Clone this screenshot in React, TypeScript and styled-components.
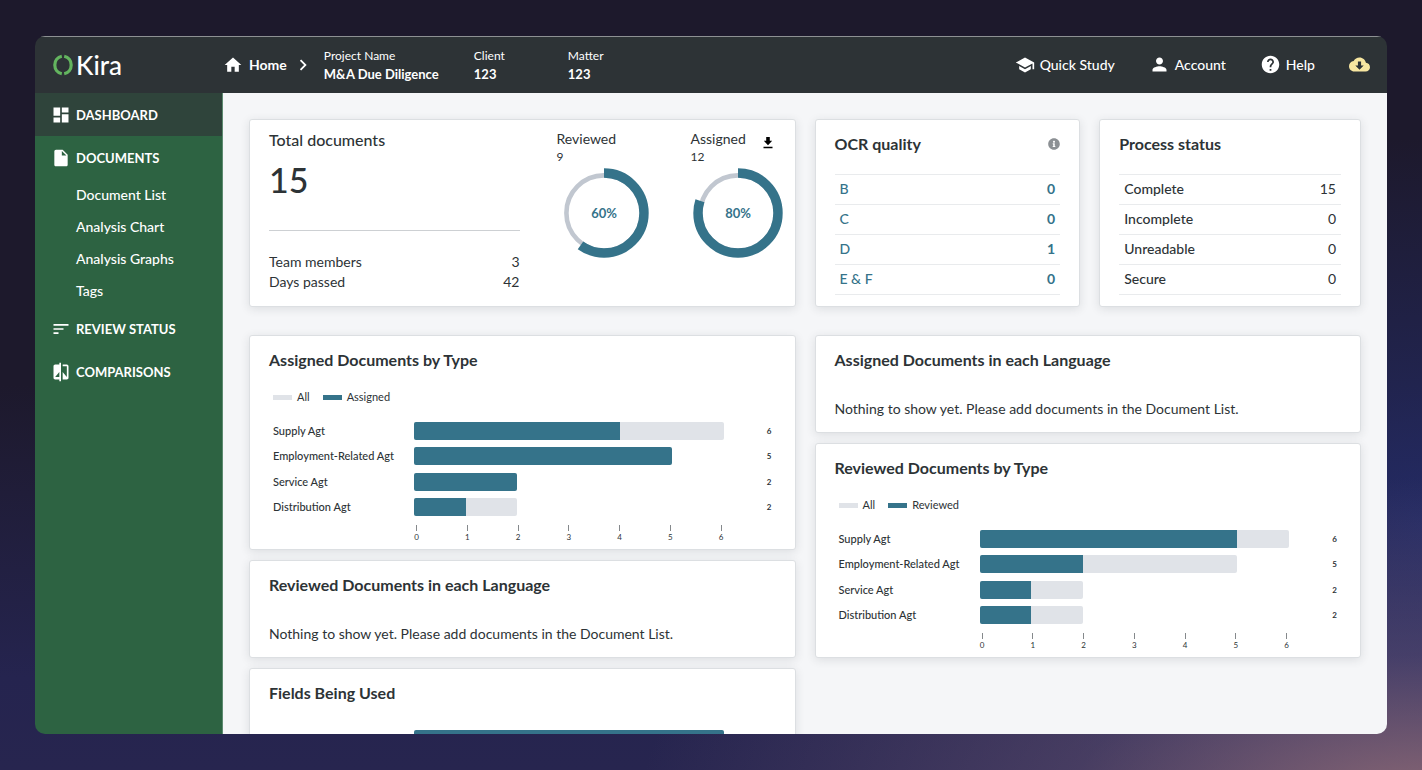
import React from "react";
import styled, { createGlobalStyle } from "styled-components";
import {
  MdChevronRight,
  MdCompare,
  MdDashboard,
  MdHelp,
  MdHome,
  MdInsertDriveFile,
  MdPerson,
  MdSchool,
  MdSort,
} from "react-icons/md";
import { FaInfoCircle } from "react-icons/fa";

const color = {
  ink: "#2d3336",
  teal: "#35738a",
  track: "#e0e3e8",
  ring: "#c1c7d0",
  green: "#2d6342",
  greenActive: "#2f443b",
  page: "#f5f6f8",
  line: "#e9ebed",
};

const GlobalStyle = createGlobalStyle`
  *, *::before, *::after { box-sizing: border-box; }
  body {
    margin: 0;
    font-family: Lato, "Open Sans", sans-serif;
    font-size: 14px;
    line-height: 20px;
    color: ${color.ink};
  }
  a { color: inherit; text-decoration: none; }
  h1, h2, h3, p, ul, dl, dd { margin: 0; padding: 0; }
  ul { list-style: none; }
  button { font: inherit; color: inherit; background: none; border: 0; padding: 0; cursor: pointer; }
`;

const Backdrop = styled.div`
  height: 100vh;
  padding: 36px 35px;
  background:
    radial-gradient(ellipse 55% 42% at 100% 104%, rgba(142, 106, 118, 0.95), rgba(110, 90, 120, 0.45) 45%, rgba(80, 72, 120, 0) 100%),
    radial-gradient(ellipse 30% 50% at 100% 68%, rgba(36, 44, 104, 0.9), rgba(36, 44, 104, 0) 100%),
    linear-gradient(180deg, #1d192c 0%, #1d192c 50%, #25244f 88%, #27254f 100%);
`;

const Window = styled.div`
  height: 100%;
  display: flex;
  flex-direction: column;
  border-radius: 10px;
  overflow: hidden;
`;

const TopBar = styled.header`
  flex: none;
  display: flex;
  align-items: center;
  height: 57px;
  padding: 0 17px 1px 18px;
  border-top: 1px solid #8d9193;
  background: ${color.ink};
  color: #fff;
  font-weight: 500;
`;

const Logo = styled.a`
  display: flex;
  align-items: center;
  gap: 3px;
  width: 170px;
  font-size: 26px;
  line-height: 32px;
`;

const HomeLink = styled.a`
  display: flex;
  align-items: center;
  gap: 6px;
  font-weight: 700;
`;

const Separator = styled.span`
  display: flex;
  margin: 0 10px 0 5px;
`;

const Facts = styled.dl`
  display: flex;
  gap: 34px;
`;

const Fact = styled.div<{ $min: number }>`
  min-width: ${(p) => p.$min}px;
  line-height: 18px;
  white-space: nowrap;
  dt { font-size: 12px; font-weight: 400; }
  dd { font-size: 13px; font-weight: 700; }
`;

const Tools = styled.nav`
  display: flex;
  align-items: center;
  gap: 34px;
  margin-left: auto;
`;

const Tool = styled.button`
  display: flex;
  align-items: center;
  gap: 5px;
  font-weight: 500;
`;

const Body = styled.div`
  flex: 1;
  min-height: 0;
  display: flex;
`;

const Sidebar = styled.nav`
  flex: none;
  width: 188px;
  border-right: 1px solid #5c8a70;
  background: ${color.green};
  color: #fff;
`;

const NavItem = styled.a<{ $active?: boolean }>`
  display: flex;
  align-items: center;
  gap: 5px;
  height: 43px;
  padding-left: 16px;
  font-size: 13px;
  font-weight: 700;
  background: ${(p) => (p.$active ? color.greenActive : "transparent")};
`;

const SubItem = styled.a`
  display: block;
  padding-left: 41px;
  line-height: 32px;
  font-weight: 500;
`;

const Main = styled.main`
  flex: 1;
  min-width: 0;
  padding: 26px;
  overflow: hidden;
  background: ${color.page};
`;

const Columns = styled.div`
  display: grid;
  grid-template-columns: 1fr 1fr;
  gap: 19px;
  align-items: start;
  margin-bottom: 28px;
`;

const SmallCards = styled.div`
  display: grid;
  grid-template-columns: 266fr 262fr;
  gap: 19px;
`;

const Stack = styled.div`
  display: flex;
  flex-direction: column;
  gap: 10px;
`;

const Card = styled.section`
  padding: 14px 19px 13px;
  border: 1px solid #dcdfe2;
  border-radius: 3px;
  background: #fff;
  box-shadow: 0 2px 10px rgba(45, 51, 54, 0.12);
`;

const SummaryCard = styled(Card)`
  display: flex;
  gap: 37px;
  height: 188px;
  padding: 10px 12px 14px 19px;
`;

const TableCard = styled(Card)`
  padding-bottom: 11px;
`;

const ChartFrame = styled(Card)`
  padding-bottom: 6px;
`;

const CardTitle = styled.h2`
  display: flex;
  align-items: center;
  justify-content: space-between;
  font-size: 16px;
  line-height: 20px;
  font-weight: 700;
`;

const Totals = styled.div`
  flex: 1;
`;

const TotalsLabel = styled.h2`
  font-size: 16px;
  line-height: 20px;
  font-weight: 500;
`;

const TotalsValue = styled.p`
  height: 81px;
  padding-top: 10px;
  border-bottom: 1px solid #cdd0d3;
  font-size: 34px;
  line-height: 40px;
  font-weight: 500;
`;

const TotalsList = styled.dl`
  padding-top: 21px;
  div { display: flex; justify-content: space-between; }
`;

const Gauges = styled.div`
  display: flex;
  gap: 42px;
`;

const Gauge = styled.div`
  width: 92px;
`;

const GaugeHead = styled.div`
  display: flex;
  justify-content: space-between;
  height: 18px;
  padding-right: 10px;
  line-height: 18px;
`;

const GaugeCount = styled.p`
  font-size: 12px;
  line-height: 18px;
`;

const GaugeRing = styled.svg`
  display: block;
  width: 90px;
  height: 90px;
  margin: 2px 0 0 2px;
`;

const DownloadButton = styled.button`
  display: flex;
  padding-top: 7px;
`;

const Table = styled.table<{ $linked?: boolean }>`
  width: 100%;
  margin-top: 20px;
  border-collapse: collapse;
  color: ${(p) => (p.$linked ? color.teal : color.ink)};
  tr { border-top: 1px solid ${color.line}; border-bottom: 1px solid ${color.line}; }
  th, td { height: 30px; padding: 0 5px 2px; font-weight: 500; }
  th { text-align: left; }
  td { text-align: right; font-weight: ${(p) => (p.$linked ? 700 : 400)}; }
`;

const EmptyNote = styled.p`
  margin-top: 29px;
`;

const Legend = styled.ul`
  display: flex;
  gap: 13px;
  margin: 17px 0 15px;
  padding-left: 4px;
  font-size: 11px;
`;

const LegendItem = styled.li<{ $swatch: string }>`
  display: flex;
  align-items: center;
  gap: 5px;
  &::before {
    content: "";
    width: 19px;
    height: 5px;
    background: ${(p) => p.$swatch};
  }
`;

const Rows = styled.ul`
  display: flex;
  flex-direction: column;
  justify-content: space-between;
  height: 94px;
`;

const Row = styled.li`
  display: grid;
  grid-template-columns: 141px 1fr 48px;
  align-items: center;
  height: 18px;
  padding: 0 4px;
  font-size: 11px;
  line-height: 18px;
  font-weight: 500;
  white-space: nowrap;
`;

const Track = styled.div`
  height: 18px;
`;

const Bar = styled.div`
  height: 18px;
  border-radius: 2px;
  overflow: hidden;
  background: ${color.track};
`;

const Fill = styled.div`
  height: 100%;
  background: ${color.teal};
`;

const Count = styled.span`
  text-align: right;
  font-size: 8px;
  font-weight: 700;
`;

const Axis = styled.div`
  display: flex;
  justify-content: space-between;
  margin: 9px 52px 0 145px;
`;

const Tick = styled.span`
  display: flex;
  flex-direction: column;
  align-items: center;
  width: 5px;
  height: 18px;
  font-size: 8px;
  line-height: 12px;
  &::before {
    content: "";
    flex: none;
    width: 1px;
    height: 6px;
    background: #85898c;
  }
`;

const MAX = 6;

type Datum = { name: string; all: number; part: number };

function BarRow({ name, all, part }: Datum) {
  return (
    <Row>
      <span>{name}</span>
      <Track>
        <Bar style={{ width: `${(all / MAX) * 100}%` }}>
          <Fill style={{ width: `${(part / all) * 100}%` }} />
        </Bar>
      </Track>
      <Count>{name ? all : null}</Count>
    </Row>
  );
}

function ChartCard({ title, series, data }: { title: string; series: string; data: Datum[] }) {
  return (
    <ChartFrame>
      <CardTitle>{title}</CardTitle>
      <Legend>
        <LegendItem $swatch={color.track}>All</LegendItem>
        <LegendItem $swatch={color.teal}>{series}</LegendItem>
      </Legend>
      <Rows>
        {data.map((d) => (
          <BarRow key={d.name} {...d} />
        ))}
      </Rows>
      <Axis>
        {Array.from({ length: MAX + 1 }, (_, n) => (
          <Tick key={n}>{n}</Tick>
        ))}
      </Axis>
    </ChartFrame>
  );
}

const FieldsCard = styled(Card)`
  padding-bottom: 60px;
`;

const FieldRows = styled.ul`
  margin-top: 27px;
`;

function EmptyCard({ title }: { title: string }) {
  return (
    <Card>
      <CardTitle>{title}</CardTitle>
      <EmptyNote>Nothing to show yet. Please add documents in the Document List.</EmptyNote>
    </Card>
  );
}

function Ring({ percent }: { percent: number }) {
  return (
    <GaugeRing viewBox="0 0 90 90">
      <circle cx="45" cy="45" r="37.6" fill="none" stroke={color.ring} strokeWidth="4.6" />
      <circle
        cx="45"
        cy="45"
        r="40"
        fill="none"
        stroke={color.teal}
        strokeWidth="9.4"
        pathLength="100"
        strokeDasharray={`${percent} 100`}
        transform="rotate(-90 45 45)"
      />
      <text x="45" y="50" textAnchor="middle" fontSize="13" fontWeight="700" fill={color.teal}>
        {percent}%
      </text>
    </GaugeRing>
  );
}

const assigned: Datum[] = [
  { name: "Supply Agt", all: 6, part: 4 },
  { name: "Employment-Related Agt", all: 5, part: 5 },
  { name: "Service Agt", all: 2, part: 2 },
  { name: "Distribution Agt", all: 2, part: 1 },
];

const reviewed: Datum[] = [
  { name: "Supply Agt", all: 6, part: 5 },
  { name: "Employment-Related Agt", all: 5, part: 2 },
  { name: "Service Agt", all: 2, part: 1 },
  { name: "Distribution Agt", all: 2, part: 1 },
];

const ocr: [string, number][] = [["B", 0], ["C", 0], ["D", 1], ["E & F", 0]];
const status: [string, number][] = [["Complete", 15], ["Incomplete", 0], ["Unreadable", 0], ["Secure", 0]];

export default function App() {
  return (
    <Backdrop>
      <GlobalStyle />
      <Window>
        <TopBar>
          <Logo href="#">
            <svg width="20" height="22" viewBox="0 0 20 22" fill="none" stroke="#63b55f" strokeWidth="3.2">
              <path d="M8.800 2.300C4.600 3.200 1.800 6.600 1.800 11s2.800 7.800 7 8.700" />
              <path d="M11.200 2.300c4.200.9 7 4.300 7 8.700s-2.800 7.800-7 8.700" />
            </svg>
            Kira
          </Logo>
          <HomeLink href="#">
            <MdHome size={20} />
            Home
          </HomeLink>
          <Separator>
            <MdChevronRight size={22} />
          </Separator>
          <Facts>
            <Fact $min={116}>
              <dt>Project Name</dt>
              <dd>M&amp;A Due Diligence</dd>
            </Fact>
            <Fact $min={60}>
              <dt>Client</dt>
              <dd>123</dd>
            </Fact>
            <Fact $min={34}>
              <dt>Matter</dt>
              <dd>123</dd>
            </Fact>
          </Facts>
          <Tools>
            <Tool>
              <MdSchool size={20} />
              Quick Study
            </Tool>
            <Tool>
              <MdPerson size={21} />
              Account
            </Tool>
            <Tool>
              <MdHelp size={21} />
              Help
            </Tool>
            <Tool aria-label="Downloads">
              <svg width="21" height="21" viewBox="0 0 24 24">
                <path
                  fill="#f7e7a1"
                  d="M19.350 10.040C18.670 6.590 15.640 4 12 4 9.110 4 6.600 5.640 5.350 8.040 2.340 8.360 0 10.910 0 14c0 3.310 2.690 6 6 6h13c2.760 0 5-2.240 5-5 0-2.640-2.050-4.780-4.650-4.960z"
                />
                <path fill={color.ink} d="M10.200 8.600h3.600v4.400h3L12 18 7.200 13h3z" />
              </svg>
            </Tool>
          </Tools>
        </TopBar>
        <Body>
          <Sidebar>
            <NavItem href="#" $active>
              <MdDashboard size={20} />
              DASHBOARD
            </NavItem>
            <NavItem href="#">
              <MdInsertDriveFile size={20} />
              DOCUMENTS
            </NavItem>
            <SubItem href="#">Document List</SubItem>
            <SubItem href="#">Analysis Chart</SubItem>
            <SubItem href="#">Analysis Graphs</SubItem>
            <SubItem href="#">Tags</SubItem>
            <NavItem href="#">
              <MdSort size={20} />
              REVIEW STATUS
            </NavItem>
            <NavItem href="#">
              <MdCompare size={20} />
              COMPARISONS
            </NavItem>
          </Sidebar>
          <Main>
            <Columns>
              <SummaryCard>
                <Totals>
                  <TotalsLabel>Total documents</TotalsLabel>
                  <TotalsValue>15</TotalsValue>
                  <TotalsList>
                    <div>
                      <dt>Team members</dt>
                      <dd>3</dd>
                    </div>
                    <div>
                      <dt>Days passed</dt>
                      <dd>42</dd>
                    </div>
                  </TotalsList>
                </Totals>
                <Gauges>
                  <Gauge>
                    <GaugeHead>Reviewed</GaugeHead>
                    <GaugeCount>9</GaugeCount>
                    <Ring percent={60} />
                  </Gauge>
                  <Gauge>
                    <GaugeHead>
                      Assigned
                      <DownloadButton aria-label="Download">
                        <svg width="10" height="12" viewBox="0 0 10 12" fill="#000">
                          <path d="M3.200 0h3.600v3.800h2.400L5 8.300.8 3.800h2.400z" />
                          <path d="M.5 9.800h9v1.400h-9z" />
                        </svg>
                      </DownloadButton>
                    </GaugeHead>
                    <GaugeCount>12</GaugeCount>
                    <Ring percent={80} />
                  </Gauge>
                </Gauges>
              </SummaryCard>
              <SmallCards>
                <TableCard>
                  <CardTitle>
                    OCR quality
                    <FaInfoCircle size={12} color="#8c9094" />
                  </CardTitle>
                  <Table $linked>
                    <tbody>
                      {ocr.map(([name, n]) => (
                        <tr key={name}>
                          <th scope="row">
                            <a href="#">{name}</a>
                          </th>
                          <td>
                            <a href="#">{n}</a>
                          </td>
                        </tr>
                      ))}
                    </tbody>
                  </Table>
                </TableCard>
                <TableCard>
                  <CardTitle>Process status</CardTitle>
                  <Table>
                    <tbody>
                      {status.map(([name, n]) => (
                        <tr key={name}>
                          <th scope="row">{name}</th>
                          <td>{n}</td>
                        </tr>
                      ))}
                    </tbody>
                  </Table>
                </TableCard>
              </SmallCards>
            </Columns>
            <Columns>
              <Stack>
                <ChartCard title="Assigned Documents by Type" series="Assigned" data={assigned} />
                <EmptyCard title="Reviewed Documents in each Language" />
                <FieldsCard>
                  <CardTitle>Fields Being Used</CardTitle>
                  <FieldRows>
                    <BarRow name="" all={6} part={6} />
                  </FieldRows>
                </FieldsCard>
              </Stack>
              <Stack>
                <EmptyCard title="Assigned Documents in each Language" />
                <ChartCard title="Reviewed Documents by Type" series="Reviewed" data={reviewed} />
              </Stack>
            </Columns>
          </Main>
        </Body>
      </Window>
    </Backdrop>
  );
}
